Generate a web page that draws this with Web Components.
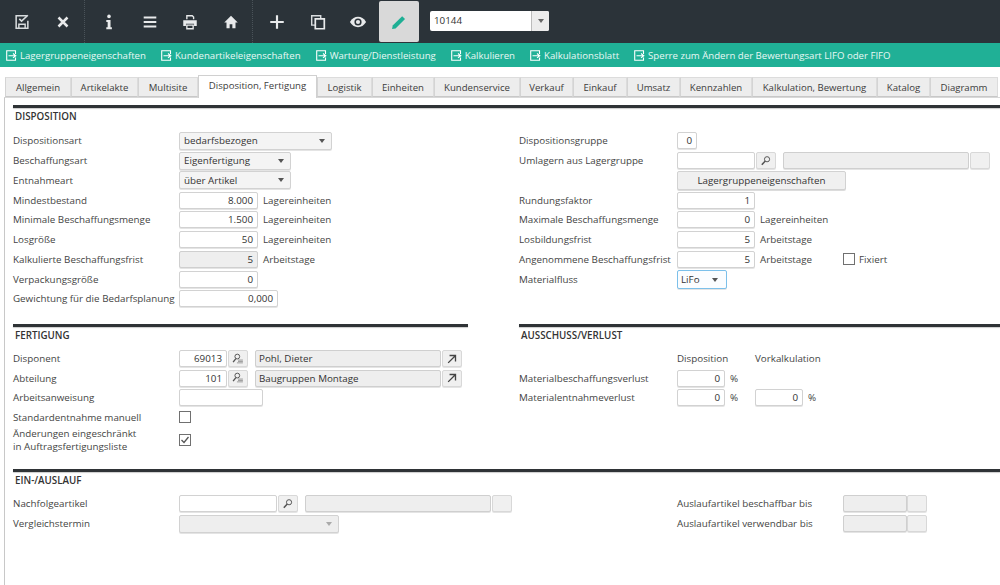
<!DOCTYPE html>
<html lang="de">
<head>
<meta charset="utf-8">
<title>Artikel</title>
<style>
  html, body { margin: 0; height: 100%; overflow: hidden; background: #fff; }
  body { font: 9.8px "Open Sans", "Noto Sans", sans-serif; color: #444; }
  .two { display: flex; }
</style>
</head>
<body>
<erp-toolbar>
  <erp-tool icon="save"></erp-tool>
  <erp-tool icon="close"></erp-tool>
  <erp-sep></erp-sep>
  <erp-tool icon="info"></erp-tool>
  <erp-tool icon="menu"></erp-tool>
  <erp-tool icon="print"></erp-tool>
  <erp-tool icon="home"></erp-tool>
  <erp-sep></erp-sep>
  <erp-tool icon="plus"></erp-tool>
  <erp-tool icon="copy"></erp-tool>
  <erp-tool icon="eye"></erp-tool>
  <erp-tool icon="pen" active></erp-tool>
  <erp-combo>10144</erp-combo>
</erp-toolbar>

<erp-linkbar>
  <erp-link>Lagergruppeneigenschaften</erp-link>
  <erp-link>Kundenartikeleigenschaften</erp-link>
  <erp-link>Wartung/Dienstleistung</erp-link>
  <erp-link>Kalkulieren</erp-link>
  <erp-link>Kalkulationsblatt</erp-link>
  <erp-link>Sperre zum Ändern der Bewertungsart LIFO oder FIFO</erp-link>
</erp-linkbar>

<erp-tabs>
  <erp-tab w="66">Allgemein</erp-tab>
  <erp-tab w="67">Artikelakte</erp-tab>
  <erp-tab w="60">Multisite</erp-tab>
  <erp-tab w="119" active>Disposition, Fertigung</erp-tab>
  <erp-tab w="55">Logistik</erp-tab>
  <erp-tab w="62">Einheiten</erp-tab>
  <erp-tab w="86">Kundenservice</erp-tab>
  <erp-tab w="53">Verkauf</erp-tab>
  <erp-tab w="54">Einkauf</erp-tab>
  <erp-tab w="53">Umsatz</erp-tab>
  <erp-tab w="72">Kennzahlen</erp-tab>
  <erp-tab w="125">Kalkulation, Bewertung</erp-tab>
  <erp-tab w="53">Katalog</erp-tab>
  <erp-tab w="68">Diagramm</erp-tab>
</erp-tabs>

<erp-panel>
  <erp-section heading="DISPOSITION" style="--row-h:19.75px">
    <div class="two">
      <erp-column width="506">
        <erp-row label="Dispositionsart"><erp-select w="153">bedarfsbezogen</erp-select></erp-row>
        <erp-row label="Beschaffungsart"><erp-select w="112">Eigenfertigung</erp-select></erp-row>
        <erp-row label="Entnahmeart"><erp-select w="112">über Artikel</erp-select></erp-row>
        <erp-row label="Mindestbestand"><erp-input w="79">8.000</erp-input><erp-unit>Lagereinheiten</erp-unit></erp-row>
        <erp-row label="Minimale Beschaffungsmenge"><erp-input w="79">1.500</erp-input><erp-unit>Lagereinheiten</erp-unit></erp-row>
        <erp-row label="Losgröße"><erp-input w="79">50</erp-input><erp-unit>Lagereinheiten</erp-unit></erp-row>
        <erp-row label="Kalkulierte Beschaffungsfrist"><erp-input w="79" disabled>5</erp-input><erp-unit>Arbeitstage</erp-unit></erp-row>
        <erp-row label="Verpackungsgröße"><erp-input w="79">0</erp-input></erp-row>
        <erp-row label="Gewichtung für die Bedarfsplanung"><erp-input w="99">0,000</erp-input></erp-row>
      </erp-column>
      <erp-column width="481" label-width="158">
        <erp-row label="Dispositionsgruppe"><erp-input w="20">0</erp-input></erp-row>
        <erp-row label="Umlagern aus Lagergruppe"><erp-input w="78"></erp-input><erp-iconbtn icon="search"></erp-iconbtn><erp-input w="186" disabled style="margin-left:7px"></erp-input><erp-iconbtn></erp-iconbtn></erp-row>
        <erp-row label=""><erp-pushbtn w="169">Lagergruppeneigenschaften</erp-pushbtn></erp-row>
        <erp-row label="Rundungsfaktor"><erp-input w="78">1</erp-input></erp-row>
        <erp-row label="Maximale Beschaffungsmenge"><erp-input w="78">0</erp-input><erp-unit>Lagereinheiten</erp-unit></erp-row>
        <erp-row label="Losbildungsfrist"><erp-input w="78">5</erp-input><erp-unit>Arbeitstage</erp-unit></erp-row>
        <erp-row label="Angenommene Beschaffungsfrist"><erp-input w="78">5</erp-input><erp-unit w="83">Arbeitstage</erp-unit><erp-check></erp-check><erp-unit style="margin-left:4px">Fixiert</erp-unit></erp-row>
        <erp-row label="Materialfluss"><erp-select w="50" focused>LiFo</erp-select></erp-row>
      </erp-column>
    </div>
  </erp-section>

  <div class="two" style="margin-top:15px">
    <erp-section heading="FERTIGUNG" style="width:455px;margin-right:51px;--body-gap:4px">
      <erp-column>
        <erp-row label="Disponent"><erp-input w="48">69013</erp-input><erp-iconbtn icon="person"></erp-iconbtn><erp-input w="186" disabled text-left style="margin-left:7px">Pohl, Dieter</erp-input><erp-iconbtn icon="arrow"></erp-iconbtn></erp-row>
        <erp-row label="Abteilung"><erp-input w="48">101</erp-input><erp-iconbtn icon="person"></erp-iconbtn><erp-input w="186" disabled text-left style="margin-left:7px">Baugruppen Montage</erp-input><erp-iconbtn icon="arrow"></erp-iconbtn></erp-row>
        <erp-row label="Arbeitsanweisung"><erp-input w="84"></erp-input></erp-row>
        <erp-row label="Standardentnahme manuell"><erp-check></erp-check></erp-row>
        <erp-row tall><span slot="label">Änderungen eingeschränkt<br>in Auftragsfertigungsliste</span><erp-check checked></erp-check></erp-row>
      </erp-column>
    </erp-section>
    <erp-section heading="AUSSCHUSS/VERLUST" style="flex:1;--body-gap:4px">
      <erp-column label-width="158">
        <erp-row label=""><erp-unit w="78" flush>Disposition</erp-unit><erp-unit flush>Vorkalkulation</erp-unit></erp-row>
        <erp-row label="Materialbeschaffungsverlust"><erp-input w="48">0</erp-input><erp-unit w="25">%</erp-unit></erp-row>
        <erp-row label="Materialentnahmeverlust"><erp-input w="48">0</erp-input><erp-unit w="25">%</erp-unit><erp-input w="48">0</erp-input><erp-unit>%</erp-unit></erp-row>
      </erp-column>
    </erp-section>
  </div>

  <erp-section heading="EIN-/AUSLAUF" style="margin-top:15px;--body-gap:4px">
    <div class="two">
      <erp-column width="664">
        <erp-row label="Nachfolgeartikel"><erp-input w="98"></erp-input><erp-iconbtn icon="search"></erp-iconbtn><erp-input w="186" disabled style="margin-left:7px"></erp-input><erp-iconbtn></erp-iconbtn></erp-row>
        <erp-row label="Vergleichstermin"><erp-select w="160" disabled></erp-select></erp-row>
      </erp-column>
      <erp-column label-width="166">
        <erp-row label="Auslaufartikel beschaffbar bis"><erp-input w="64" disabled></erp-input><erp-iconbtn flush></erp-iconbtn></erp-row>
        <erp-row label="Auslaufartikel verwendbar bis"><erp-input w="64" disabled></erp-input><erp-iconbtn flush></erp-iconbtn></erp-row>
      </erp-column>
    </div>
  </erp-section>
</erp-panel>

<script>
const ICONS = {
  save: '<path d="M15.500 3H3.500v14h13V8.500" fill="none" stroke="#d8dcde" stroke-width="1.700"/><path d="M6.500 17v-4.500h7V17" fill="none" stroke="#d8dcde" stroke-width="1.600"/><path d="M7 6.500l2.500 2.500L16.500 2.500" fill="none" stroke="#d8dcde" stroke-width="1.800"/>',
  close: '<path d="M5 5l10 10M15 5L5 15" stroke="#e8eaeb" stroke-width="2.800" fill="none"/>',
  info: '<circle cx="10" cy="3.800" r="2" fill="#e8eaeb"/><path d="M7 7.800h4.700v8h1.500V18H7v-2.200h1.500V10H7z" fill="#e8eaeb"/>',
  menu: '<path d="M3 5h14M3 10h14M3 15h14" stroke="#e8eaeb" stroke-width="2.200" fill="none"/>',
  print: '<path d="M6.500 7V3h6l1.500 1.500V7" fill="none" stroke="#e8eaeb" stroke-width="1.500"/><path d="M2.500 8h15v6.500h-3V12h-9v2.500h-3z" fill="#e8eaeb"/><path d="M6.500 13.500h7V17.500h-7z" fill="none" stroke="#e8eaeb" stroke-width="1.500"/>',
  home: '<path d="M10 3L2.500 10.500H5V17h3.500V12.500h3V17H15V10.500h2.500z" fill="#e8eaeb"/>',
  plus: '<path d="M10 2.500v15M2.500 10h15" stroke="#e8eaeb" stroke-width="2.400" fill="none"/>',
  copy: '<path d="M13 6V3H3v10.500H7" fill="none" stroke="#d8dcde" stroke-width="1.600"/><path d="M7 6.500h10V17.500H7z" fill="none" stroke="#e8eaeb" stroke-width="1.900"/>',
  eye: '<path d="M1 10C3.500 6 6.500 4.300 10 4.300S16.500 6 19 10c-2.500 4-5.500 5.700-9 5.700S3.500 14 1 10z" fill="#e8eaeb"/><circle cx="10" cy="10" r="4" fill="#2b3339"/><circle cx="10" cy="10" r="2.300" fill="#e8eaeb"/>',
  pen: '<path d="M3 14L13.500 3.500l3.200 3.200L6.200 17.200l-3.900.7z" fill="#1eaf94"/>',
  search: '<circle cx="11.500" cy="7.500" r="3.700" fill="none" stroke="#555" stroke-width="1.400"/><path d="M9 10L4 15.500" stroke="#555" stroke-width="2.200"/>',
  person: '<circle cx="9" cy="6.500" r="3.400" fill="none" stroke="#555" stroke-width="1.400"/><path d="M7 9.500L3 14.500" stroke="#555" stroke-width="2"/><path d="M10 11.500h7M10 13.500h7M8.500 15.500h8.500" stroke="#777" stroke-width="1"/>',
  arrow: '<path d="M4.500 15.500L14 6M6.500 5h8.500v8.500" fill="none" stroke="#444" stroke-width="1.900"/>'
};

// small base so every element below only has to give its css and markup
class ErpElement extends HTMLElement {
  constructor() {
    super();
    this.attachShadow({ mode: 'open' });
  }
  connectedCallback() {
    this.shadowRoot.innerHTML = `<style>${this.css()}</style>${this.html()}`;
  }
  css() { return ''; }
  html() { return '<slot></slot>'; }
  attr(name, fallback = '') {
    return this.hasAttribute(name) ? this.getAttribute(name) : fallback;
  }
}

class ErpToolbar extends ErpElement {
  css() {
    return `:host { display: flex; align-items: flex-start; height: 43px; background: #2b3339; padding-left: 2px; }`;
  }
}

class ErpTool extends ErpElement {
  css() {
    return `
      :host { display: flex; align-items: center; justify-content: center; width: 40.500px; height: 43px; box-sizing: border-box; }
      :host([active]) { background: #d9d9d9; border-radius: 2px; margin: 1px 0 0; height: 41px; }
      svg { width: 18px; height: 18px; }
    `;
  }
  html() {
    return `<svg viewBox="0 0 20 20">${ICONS[this.attr('icon')]}</svg>`;
  }
}

class ErpSep extends ErpElement {
  css() {
    return `:host { display: block; width: 0; height: 43px; border-left: 1px dotted #4a5359; margin: 0 4px 0 1px; }`;
  }
}

class ErpCombo extends ErpElement {
  css() {
    return `
      :host { display: flex; width: 119px; height: 20px; margin: 11px 0 0 11px; background: #fff; border-radius: 2px; color: #333; box-sizing: border-box; font-size: 9.800px; }
      .txt { flex: 1; padding-left: 4px; line-height: 20px; }
      .arr { width: 17px; background: #ececec; border-left: 1px solid #bbb; display: flex; align-items: center; justify-content: center; border-radius: 0 2px 2px 0; }
      .arr i { border: 3.500px solid transparent; border-top: 4px solid #666; border-bottom: 0; }
    `;
  }
  html() {
    return `<div class="txt"><slot></slot></div><div class="arr"><i></i></div>`;
  }
}

class ErpLinkbar extends ErpElement {
  css() {
    return `:host { display: flex; align-items: center; gap: 15px; height: 24px; background: #20b096; padding-left: 6px; color: #fff; box-sizing: border-box; font-size: 9.650px; }`;
  }
}

class ErpLink extends ErpElement {
  css() {
    return `
      :host { display: inline-flex; align-items: center; gap: 3px; white-space: nowrap; color: #e9f8f5; }
      svg { width: 11px; height: 11px; flex: none; }
    `;
  }
  html() {
    return `<svg viewBox="0 0 11 11"><path d="M9.500 4V.7H.7v9.600h8.800V7.500" fill="none" stroke="#fff" stroke-width="1.100"/><path d="M2.500 5.700h6.500M7 3.500l2.800 2.200L7 7.900" fill="none" stroke="#fff" stroke-width="1.100"/></svg><slot></slot>`;
  }
}

class ErpTabs extends ErpElement {
  css() {
    return `:host { display: flex; align-items: flex-end; height: 22px; margin: 8px 0 0; padding-left: 5px; font-size: 9.600px; }`;
  }
}

class ErpTab extends ErpElement {
  css() {
    return `
      :host { display: flex; align-items: center; justify-content: center; box-sizing: border-box; width: ${this.attr('w')}px; height: 20px; background: #ededed; border: 1px solid #dcdcdc; border-left-color: #d4d4d4; border-bottom-color: #c8c8c8; color: #3c3c3c; white-space: nowrap; }
      :host([active]) { height: 23px; background: #fff; border-color: #d0d0d0; border-bottom: 0; margin-bottom: -1px; padding-bottom: 3px; position: relative; z-index: 1; }
    `;
  }
}

class ErpPanel extends ErpElement {
  css() {
    return `:host { display: block; height: 491px; margin-left: 4px; padding: 7px 0 0 8px; border-left: 1px solid #c8c8c8; border-top: 1px solid #d8d8d8; box-sizing: border-box; }`;
  }
}

class ErpSection extends ErpElement {
  css() {
    return `
      :host { display: block; }
      .rule { height: 3px; background: #2f3336; box-shadow: 0 1px 1px #ccc; }
      h2 { margin: 0 0 var(--body-gap, 5px) 2px; height: 18px; line-height: 18px; font-size: 9.800px; font-weight: 600; color: #333; }
    `;
  }
  html() {
    return `<div class="rule"></div><h2>${this.attr('heading')}</h2><slot></slot>`;
  }
}

class ErpColumn extends ErpElement {
  css() {
    const w = this.attr('width');
    return `:host { display: block; --label-width: ${this.attr('label-width', '166')}px; ${w ? `width: ${w}px; flex: none;` : ''} }`;
  }
}

class ErpRow extends ErpElement {
  css() {
    return `
      :host { display: flex; align-items: center; height: var(--row-h, 19.6px); white-space: nowrap; }
      :host([tall]) { height: 28px; margin-top: -1px; line-height: 13px; }
      .lbl { flex: none; width: var(--label-width, 166px); }
      .fields { display: flex; align-items: center; }
    `;
  }
  html() {
    return `<div class="lbl"><slot name="label">${this.attr('label')}</slot></div><div class="fields"><slot></slot></div>`;
  }
}

class ErpInput extends ErpElement {
  css() {
    return `
      :host { display: block; box-sizing: border-box; width: ${this.attr('w')}px; height: 17px; line-height: 15px; padding: 0 4px; background: #fff; border: 1px solid #d2d2d2; border-radius: 2px; text-align: right; color: #333; box-shadow: 0 1px 0 #e4e4e4; overflow: hidden; white-space: nowrap; }
      :host([disabled]) { background: #eeeeee; border-color: #cfcfcf; }
      :host([text-left]) { text-align: left; padding-left: 3px; }
    `;
  }
}

class ErpSelect extends ErpElement {
  css() {
    return `
      :host { display: flex; align-items: center; justify-content: space-between; box-sizing: border-box; width: ${this.attr('w')}px; height: 18px; padding: 0 6px 0 4px; background: #f4f4f4; border: 1px solid #d2d2d2; border-radius: 2px; color: #333; box-shadow: 0 1px 0 #e4e4e4; }
      :host([focused]) { border-color: #7cc0ea; height: 19px; background: #fbfdff; padding-left: 3px; padding-right: 8px; margin-top: 1px; }
      :host([disabled]) { background: #eeeeee; }
      i { border: 3px solid transparent; border-top: 4px solid #555; border-bottom: 0; }
      :host([disabled]) i { border-top-color: #aaa; }
    `;
  }
  html() {
    return `<span><slot></slot></span><i></i>`;
  }
}

class ErpIconbtn extends ErpElement {
  css() {
    return `
      :host { display: flex; align-items: center; justify-content: center; box-sizing: border-box; width: 20px; height: 17px; margin-left: 1px; background: #f0f0f0; border: 1px solid #d8d8d8; border-radius: 2px; box-shadow: 0 1px 0 #e4e4e4; }
      :host([flush]) { margin-left: 0; }
      svg { width: 14px; height: 14px; }
    `;
  }
  html() {
    const icon = ICONS[this.attr('icon')];
    return icon ? `<svg viewBox="0 0 20 20">${icon}</svg>` : '';
  }
}

class ErpPushbtn extends ErpElement {
  css() {
    return `
      :host { display: flex; align-items: center; justify-content: center; box-sizing: border-box; width: ${this.attr('w')}px; height: 19px; background: #f0f0f0; border: 1px solid #d2d2d2; border-radius: 2px; color: #333; box-shadow: 0 1px 0 #dcdcdc; }
    `;
  }
}

class ErpUnit extends ErpElement {
  css() {
    const w = this.attr('w');
    return `
      :host { display: block; margin-left: 5px; ${w ? `width: ${w}px; box-sizing: border-box;` : ''} }
      :host([flush]) { margin-left: 0; }
    `;
  }
}

class ErpCheck extends ErpElement {
  css() {
    return `
      :host { display: flex; align-items: center; justify-content: center; box-sizing: border-box; width: 12px; height: 12px; background: #fff; border: 1px solid #707070; }
      svg { width: 10px; height: 10px; }
    `;
  }
  html() {
    return this.hasAttribute('checked')
      ? '<svg viewBox="0 0 10 10"><path d="M1.500 5l2.500 2.500L8.500 2" fill="none" stroke="#555" stroke-width="1.300"/></svg>'
      : '';
  }
}

customElements.define('erp-toolbar', ErpToolbar);
customElements.define('erp-tool', ErpTool);
customElements.define('erp-sep', ErpSep);
customElements.define('erp-combo', ErpCombo);
customElements.define('erp-linkbar', ErpLinkbar);
customElements.define('erp-link', ErpLink);
customElements.define('erp-tabs', ErpTabs);
customElements.define('erp-tab', ErpTab);
customElements.define('erp-panel', ErpPanel);
customElements.define('erp-section', ErpSection);
customElements.define('erp-column', ErpColumn);
customElements.define('erp-row', ErpRow);
customElements.define('erp-input', ErpInput);
customElements.define('erp-select', ErpSelect);
customElements.define('erp-iconbtn', ErpIconbtn);
customElements.define('erp-pushbtn', ErpPushbtn);
customElements.define('erp-unit', ErpUnit);
customElements.define('erp-check', ErpCheck);
</script>
</body>
</html>
